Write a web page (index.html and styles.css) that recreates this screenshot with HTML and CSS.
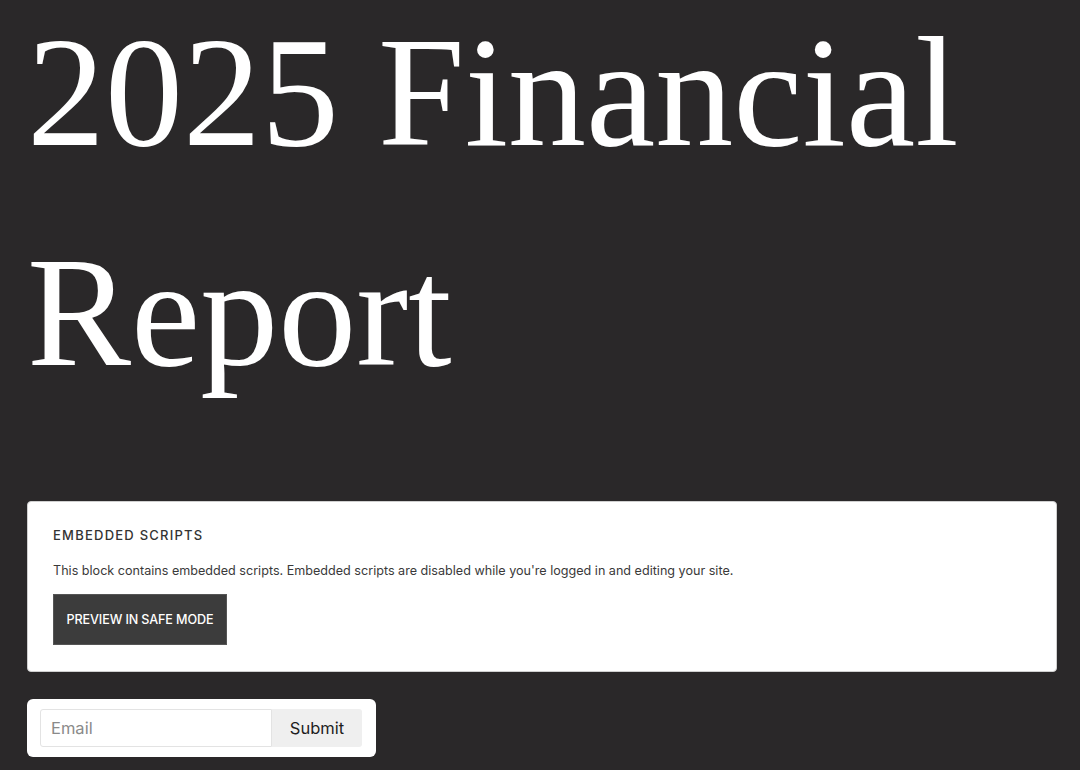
FILE: index.html
```html
<!DOCTYPE html>
<html lang="en">
<head>
<meta charset="utf-8">
<title>2025 Financial Report</title>
<link rel="stylesheet" href="styles.css">
</head>
<body>
<main class="page">
  <h1 class="title">2025 Financial Report</h1>
  <section class="embed-card">
    <h2 class="embed-heading">EMBEDDED SCRIPTS</h2>
    <p class="embed-text">This block contains embedded scripts. Embedded scripts are disabled while you're logged in and editing your site.</p>
    <button class="embed-button" type="button">PREVIEW IN SAFE MODE</button>
  </section>
  <form class="signup">
    <input class="signup-input" type="email" placeholder="Email">
    <button class="signup-button" type="button">Submit</button>
  </form>
</main>
</body>
</html>
```

FILE: styles.css
```css
html, body {
  margin: 0;
  padding: 0;
  background: #2a2829;
}

.page {
  padding: 0 23px 0 27px;
  display: flex;
  flex-direction: column;
  align-items: flex-start;
}

.title {
  margin: -17px 0 0 0;
  font-family: "Liberation Serif", "Times New Roman", serif;
  font-weight: 400;
  font-size: 156px;
  line-height: 220px;
  color: #ffffff;
  width: 1000px;
}

.embed-card {
  margin-top: 78px;
  align-self: stretch;
  box-sizing: border-box;
  height: 171px;
  background: #ffffff;
  border: 1px solid #cfcfcf;
  border-radius: 4px;
  padding: 25px 25px 0 25px;
  font-family: Inter, "Liberation Sans", sans-serif;
  color: #333333;
}

.embed-heading {
  margin: 0;
  font-size: 13px;
  font-weight: 500;
  letter-spacing: 0.095em;
  line-height: 16px;
  color: #333;
}

.embed-text {
  margin: 20px 0 0 0;
  font-size: 12.6px;
  line-height: 16px;
  color: #3a3a3a;
}

.embed-button {
  margin-top: 15px;
  width: 174px;
  height: 51px;
  background: #3c3c3c;
  color: #ffffff;
  border: 1px solid #555;
  font-family: Inter, "Liberation Sans", sans-serif;
  font-size: 12.6px;
  font-weight: 500;
  letter-spacing: -0.01em;
  padding: 0;
}

.signup {
  margin-top: 27px;
  width: 349px;
  height: 58px;
  box-sizing: border-box;
  background: #ffffff;
  border-radius: 6px;
  padding: 10px 13px;
  display: flex;
}

.signup-input {
  width: 232px;
  height: 38px;
  box-sizing: border-box;
  border: 1px solid #e3e3e3;
  border-radius: 3px 0 0 3px;
  padding: 0 10px;
  font-family: Inter, "Liberation Sans", sans-serif;
  font-size: 16.5px;
  color: #222;
  outline: none;
}

.signup-input::placeholder {
  color: #8a8a8a;
}

.signup-button {
  width: 90px;
  height: 38px;
  border: none;
  border-radius: 0 3px 3px 0;
  background: #efefef;
  color: #1e1e1e;
  font-family: Inter, "Liberation Sans", sans-serif;
  font-size: 16.5px;
  padding: 0;
}
```
